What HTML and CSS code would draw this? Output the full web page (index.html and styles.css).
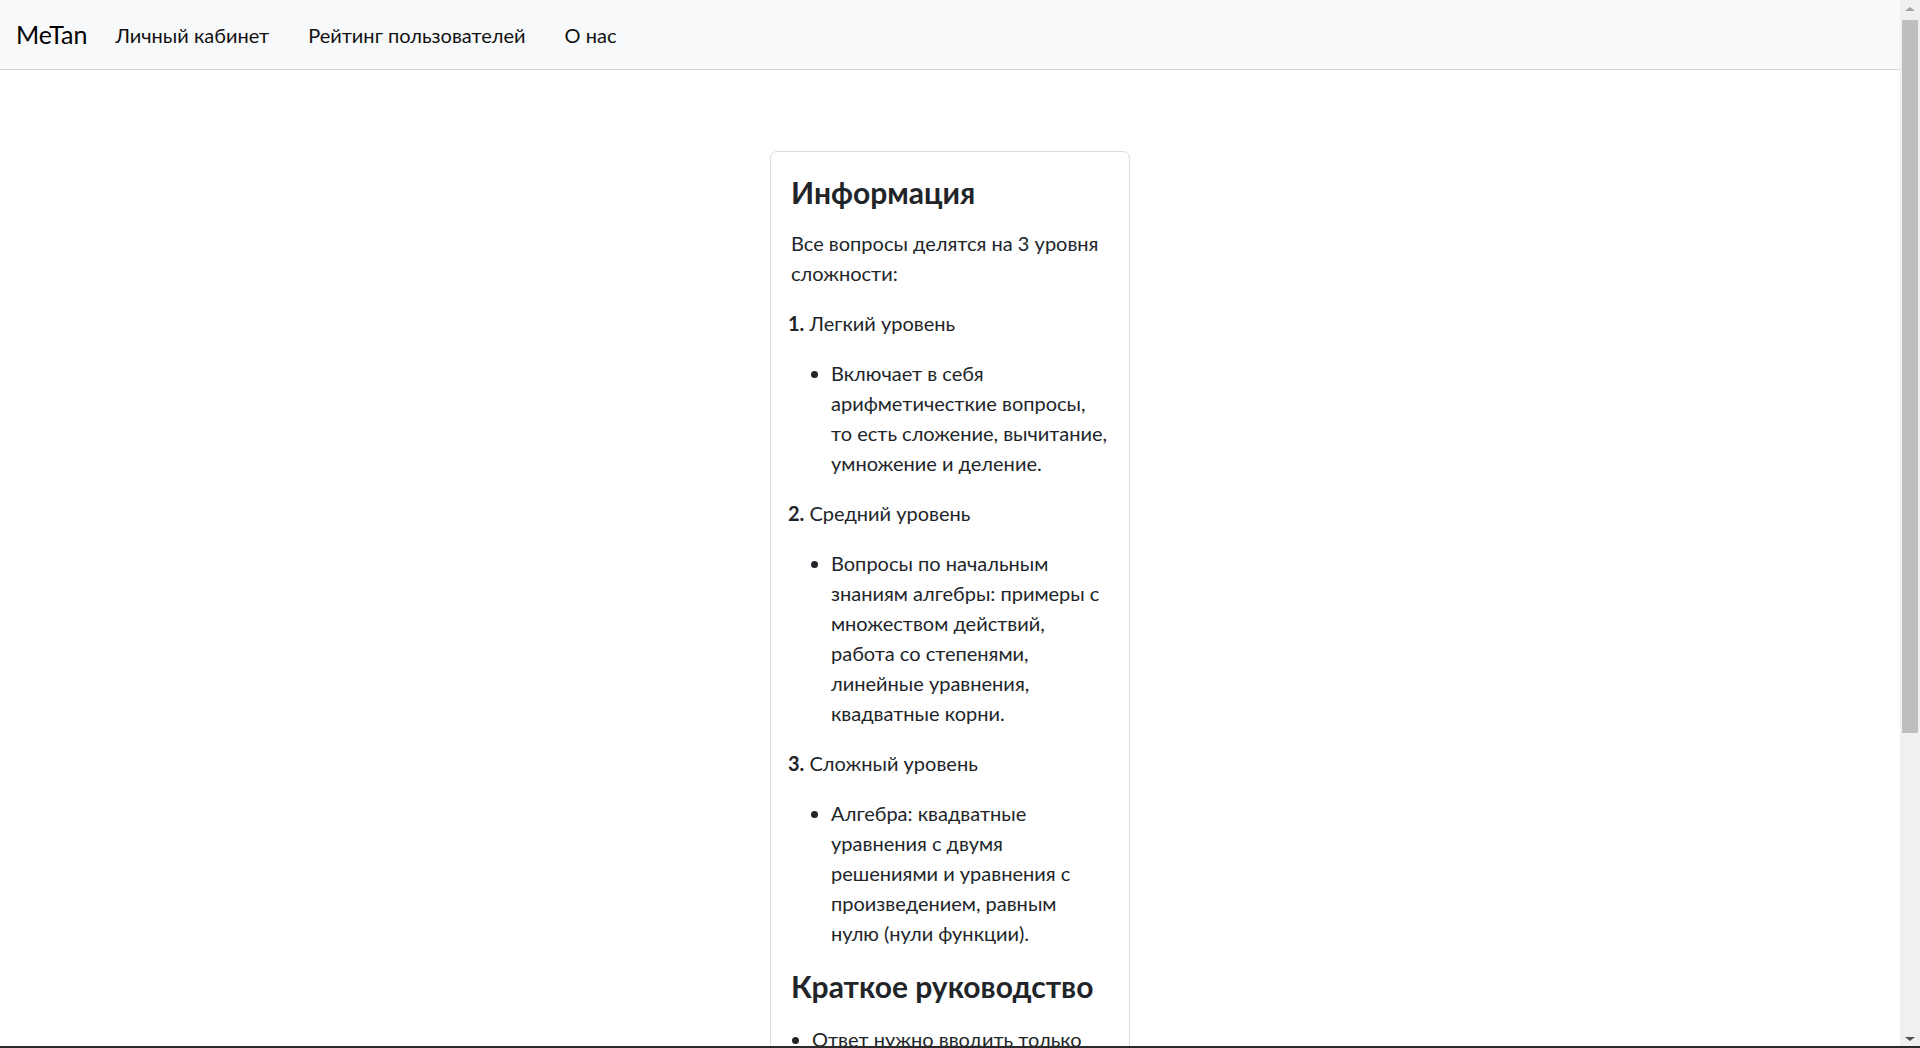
FILE: index.html
```html
<!DOCTYPE html>
<html lang="ru">
<head>
<meta charset="utf-8">
<title>MeTan — О нас</title>
<link rel="stylesheet" href="styles.css">
</head>
<body>
<nav class="navbar">
  <a class="brand" href="#">MeTan</a>
  <ul class="nav">
    <li><a class="nav-link" href="#">Личный кабинет</a></li>
    <li><a class="nav-link" href="#">Рейтинг пользователей</a></li>
    <li><a class="nav-link" href="#">О нас</a></li>
  </ul>
</nav>

<main class="main">
  <section class="card">
    <h4 class="card-title">Информация</h4>
    <p>Все вопросы делятся на 3 уровня сложности:</p>

    <p class="level"><strong>1.</strong> Легкий уровень</p>
    <ul class="level-list">
      <li>Включает в себя арифметичесткие вопросы, то есть сложение, вычитание, умножение и деление.</li>
    </ul>

    <p class="level"><strong>2.</strong> Средний уровень</p>
    <ul class="level-list">
      <li>Вопросы по начальным знаниям алгебры: примеры с множеством действий, работа со степенями, линейные уравнения, квадватные корни.</li>
    </ul>

    <p class="level"><strong>3.</strong> Сложный уровень</p>
    <ul class="level-list">
      <li>Алгебра: квадватные уравнения с двумя решениями и уравнения с произведением, равным нулю (нули функции).</li>
    </ul>

    <h4 class="card-title guide-title">Краткое руководство</h4>
    <ul class="guide-list">
      <li>Ответ нужно вводить только числом, без пробелов и лишних символов.</li>
      <li>Дробные ответы записываются через точку.</li>
      <li>Если у уравнения два корня, вводите их через запятую.</li>
      <li>За каждый правильный ответ начисляются очки рейтинга.</li>
    </ul>
  </section>
</main>

<div class="scrollbar" aria-hidden="true">
  <span class="scroll-arrow scroll-up"></span>
  <span class="scroll-thumb"></span>
  <span class="scroll-arrow scroll-down"></span>
</div>
<div class="window-edge"></div>
</body>
</html>
```
FILE: styles.css
```css
html, body {
  margin: 0;
  padding: 0;
}

body {
  margin-right: 20px;
  font-family: "Lato", "Noto Sans", sans-serif;
  font-size: 20px;
  line-height: 1.5;
  color: #212529;
  background: #fff;
}

a {
  text-decoration: none;
}

.navbar {
  display: flex;
  align-items: center;
  height: 69px;
  padding: 0 15px 0 16px;
  background: #f8f9fa;
  border-bottom: 1px solid #d5d6d7;
}

.brand {
  font-size: 25px;
  line-height: 1.5;
  color: #000;
  margin-right: 8px;
}

.nav {
  display: flex;
  list-style: none;
  margin: 0;
  padding: 0;
}

.nav-link {
  display: block;
  padding: 0 19px 0 20px;
  font-size: 20px;
  color: #111;
}

.main {
  padding: 81px 0 40px;
}

.card {
  box-sizing: border-box;
  width: 360px;
  margin: 0 auto;
  padding: 22px 20px 24px;
  border: 1px solid #dadbdc;
  border-radius: 7px;
}

.card-title {
  margin: 0 0 18px;
  font-size: 30px;
  font-weight: 700;
  line-height: 1.2;
  color: #212529;
}

.guide-title {
  margin-bottom: 20px;
}

p {
  margin: 0 0 20px;
}

.level strong {
  margin-left: -3px;
  font-weight: 700;
}

.level-list {
  margin: 0 0 20px;
  padding-left: 40px;
}

.guide-list {
  margin: 0;
  padding-left: 21px;
}

.guide-list li {
  margin-bottom: 8px;
}

/* classic window scrollbar drawn over the right edge */
.scrollbar {
  position: fixed;
  top: 0;
  right: 0;
  bottom: 0;
  width: 20px;
  display: flex;
  flex-direction: column;
  align-items: center;
  background: #f0f0f0;
}

.scroll-arrow {
  flex: 0 0 20px;
  width: 0;
  height: 0;
}

.scroll-up {
  margin-top: 7px;
  border-left: 5px solid transparent;
  border-right: 5px solid transparent;
  border-bottom: 4px solid #a3a3a3;
  flex: 0 0 auto;
}

.scroll-thumb {
  width: 16px;
  height: 713px;
  margin-top: 9px;
  background: #bebebe;
}

.scroll-down {
  margin-top: auto;
  margin-bottom: 7px;
  border-left: 5px solid transparent;
  border-right: 5px solid transparent;
  border-top: 4px solid #505050;
  flex: 0 0 auto;
}

.window-edge {
  position: fixed;
  left: 0;
  right: 0;
  bottom: 0;
  height: 2px;
  background: #2a2a2a;
  z-index: 2;
}
```
